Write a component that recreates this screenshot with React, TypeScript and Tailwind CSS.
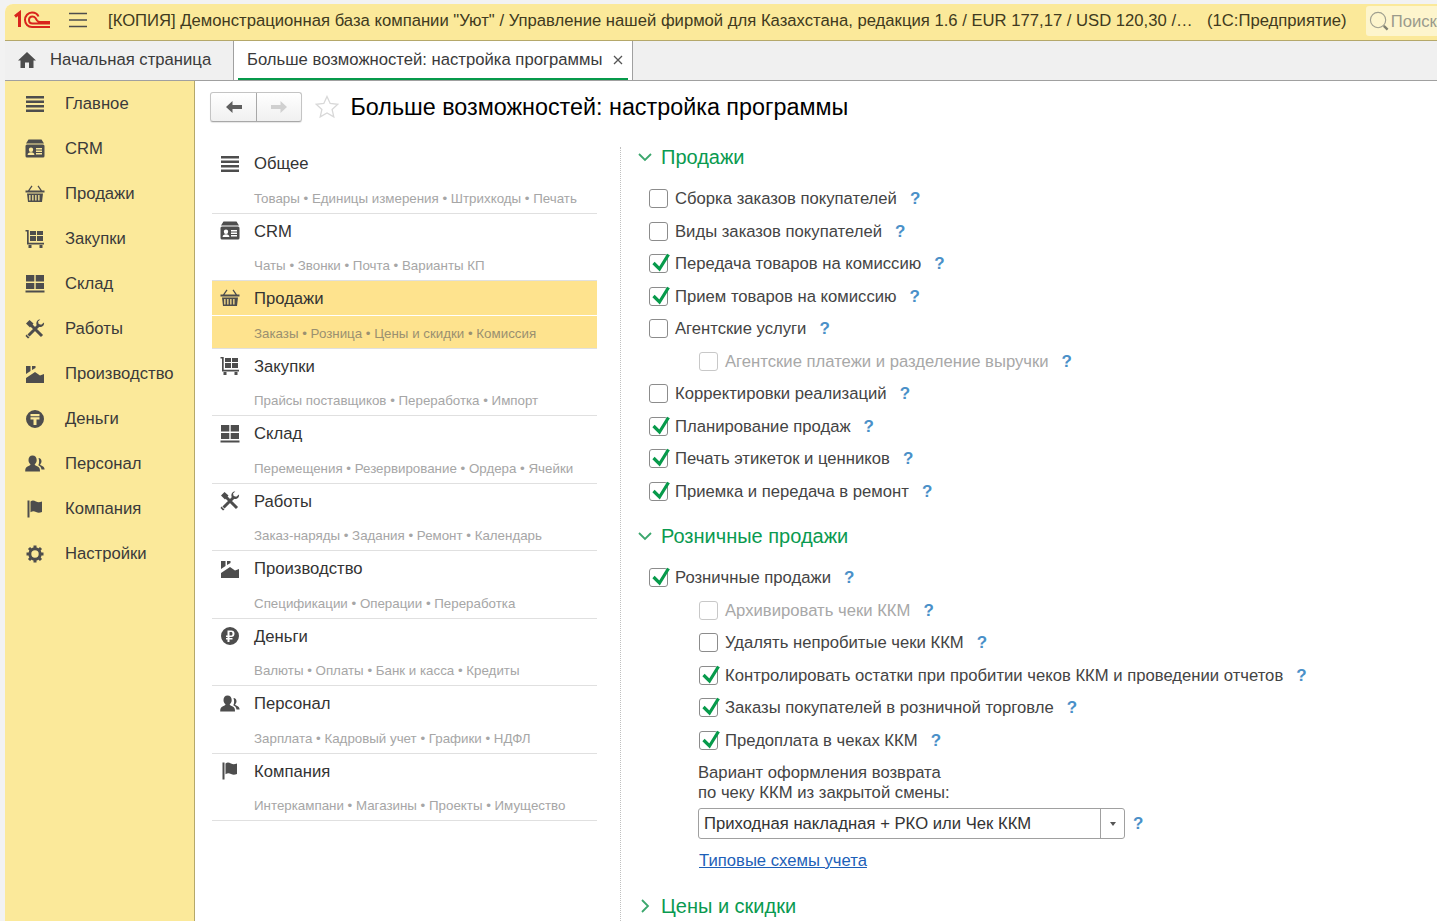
import { FunctionComponent } from "react";

const Icon: FunctionComponent<{ name: string; className?: string }> = ({ name, className = "w-5 h-5 text-[#4d4d4d]" }) => {
  const shapes: Record<string, JSX.Element> = {
    main: (
      <path d="M1 2h18v2.400H1zM1 6.600h18V9H1zM1 11h18v2.400H1zM1 15.600h18V18H1z" />
    ),
    crm: (
      <path fillRule="evenodd" d="M3.500.5h13L19 4.500H1zM2 5.500h16a1.500 1.500 0 0 1 1.500 1.500v10a1.500 1.500 0 0 1-1.500 1.500H2A1.500 1.500 0 0 1 .5 17V7A1.500 1.500 0 0 1 2 5.500zM6 8.500a2.200 2.200 0 1 0 0 4.400 2.200 2.200 0 0 0 0-4.400zm-3.400 7.500h6.800c0-2-1.500-2.800-3.400-2.800s-3.400.8-3.400 2.800zM11 9v1.400h6V9zm0 2.600v1.300h6v-1.300zm0 2.500V15.500h6v-1.400z" />
    ),
    sales: (
      <path fillRule="evenodd" d="M6.500 1.500l1 .8L4.600 6.500h10.800l-2.900-4.200 1-.8L17 6.500h2.500V8.400H.5V6.500H3zM2 9.500h16L17 18H3zm2.200 1.500v5.500h1.300V11zm3 0v5.500h1.300V11zm3 0v5.500h1.300V11zm3 0v5.500h1.300V11z" />
    ),
    buy: (
      <path fillRule="evenodd" d="M.5 1h3.200v12.800H19V15.400H2V2.600H.5zM5 2h6v4H5zm7 0h6v4h-6zM5 7h6v5H5zm7 0h6v5h-6zM3.500 16h3v3h-3zm11 0h3v3h-3z" />
    ),
    stock: (
      <path d="M1 1h8.300v6.500H1zM10.700 1H19v6.500h-8.300zM1 9h8.300v6H1zM10.700 9H19v6h-8.300zM.500 16.500h19V18.500H.500z" />
    ),
    works: (
      <>
        <path d="M5.500 5.500L17 17M14 6L3.500 16.500" fill="none" stroke="currentColor" strokeWidth="3" />
        <path d="M1 4.500L4.500 1l4 3.500-3.500 4zM12.500 1.500c-1.500 1.500-1.500 3.800-.3 5.500 1.700 1.500 4.300 1.500 6-.3.800-.9 1-2.200.8-3.200l-2.800 2.300-2.500-.8-.7-2.500 2.300-2c-1-.3-2.100 0-2.800 1zM1.500 15.500l3 3-1.500 1L.5 17z" />
      </>
    ),
    prod: (
      <path d="M1 19v-5l9-6 5 3.500 4-1.500v9zM1 2h4.500v5L1 10zM7 2h3.500v2L7 6z" />
    ),
    tenge: (
      <path fillRule="evenodd" d="M10 1a9 9 0 1 1 0 18 9 9 0 0 1 0-18zM5.500 5v2.200h9V5zm0 3.300v2.200h3V16h3v-5.500h3V8.300z" />
    ),
    ruble: (
      <path fillRule="evenodd" d="M10 1a9 9 0 1 1 0 18 9 9 0 0 1 0-18zM7.500 4.500V9.500H6V11h1.500v1H6v1.400h1.500V16h2v-2.600h3V12h-3v-1h1.800c2 0 3.200-1.300 3.200-3.300s-1.200-3.200-3.200-3.200zm2 1.600h1.500c1 0 1.500.6 1.500 1.600s-.5 1.800-1.500 1.800H9.500z" />
    ),
    staff: (
      <path d="M7.500 1.500c2.700 0 4.200 2 4.200 4.500 0 2-.8 3.500-2 4.300 0 1.200 1.500 1.500 3 2.200 1.800.8 2.300 2 2.300 5H.2c0-3 .6-4.200 2.300-5 1.500-.7 3-1 3-2.200-1.200-.8-2-2.300-2-4.300 0-2.500 1.500-4.500 4-4.500zM13.500 4c1.900 0 3 1.400 3 3.300 0 1.300-.6 2.500-1.400 3 .1.800.9 1.100 2 1.700 1.500.8 2.400 1.500 2.500 3.500h-3.100c-.4-2.300-1.400-3.300-3.200-4.200 1-1.700 1.100-4.500.2-7.300z" />
    ),
    company: (
      <path d="M2.500 1.500h2v17h-2zM5.500 2.500c2-1.500 3.500-1 5.500 0s3.500.8 6 0V13c-2.500 1-4 1-6 0s-3.500-1-5.500.3z" />
    ),
    settings: (
      <g fill="none" stroke="currentColor">
        <circle cx="10" cy="10" r="5.200" strokeWidth="3" />
        <path
          d="M10 1.500v3.500M10 15v3.500M1.500 10H5M15 10h3.500M4 4l2.500 2.500M16 4l-2.500 2.500M4 16l2.500-2.500M16 16l-2.500-2.500"
          strokeWidth="3"
        />
      </g>
    ),
    home: (
      <path d="M10 2l9 8.500h-2.500V18H12v-5.500H8V18H3.500v-7.500H1z" />
    ),
  };
  return (
    <svg viewBox="0 0 20 20" fill="currentColor" className={className}>
      {shapes[name]}
    </svg>
  );
};

const Logo1C = () => (
  <svg viewBox="0 0 38 20" className="w-[38px] h-5" fill="none" stroke="#d9241c">
    <path d="M1 6.500L5.500 3V17" strokeWidth="3" />
    <path d="M36 17H18c-4 0-7-3-7-7s3-7.500 7-7.500c3 0 5.500 1.500 6.500 4" strokeWidth="2" />
    <path d="M36 13.500H18.500c-2 0-3.500-1.500-3.500-3.500s1.500-3.500 3.500-3.500c1.300 0 2.300.6 3 1.500l1.500 2.500c.8 1 1.500 1.500 3 1.500h10" strokeWidth="2" />
  </svg>
);

const Arrow: FunctionComponent<{ dir: "left" | "right"; className: string }> = ({ dir, className }) => (
  <svg viewBox="0 0 18 14" className={`w-[18px] h-3.5 ${className}`} fill="currentColor">
    {dir === "left" ? <path d="M7.500 1L1 7l6.500 6V9H17V5H7.500z" /> : <path d="M10.500 1L17 7l-6.500 6V9H1V5h9.500z" />}
  </svg>
);

const sideItems = [
  ["main", "Главное"],
  ["crm", "CRM"],
  ["sales", "Продажи"],
  ["buy", "Закупки"],
  ["stock", "Склад"],
  ["works", "Работы"],
  ["prod", "Производство"],
  ["tenge", "Деньги"],
  ["staff", "Персонал"],
  ["company", "Компания"],
  ["settings", "Настройки"],
];

const groups = [
  ["main", "Общее", "Товары • Единицы измерения • Штрихкоды • Печать"],
  ["crm", "CRM", "Чаты • Звонки • Почта • Варианты КП"],
  ["sales", "Продажи", "Заказы • Розница • Цены и скидки • Комиссия"],
  ["buy", "Закупки", "Прайсы поставщиков • Переработка • Импорт"],
  ["stock", "Склад", "Перемещения • Резервирование • Ордера • Ячейки"],
  ["works", "Работы", "Заказ-наряды • Задания • Ремонт • Календарь"],
  ["prod", "Производство", "Спецификации • Операции • Переработка"],
  ["ruble", "Деньги", "Валюты • Оплаты • Банк и касса • Кредиты"],
  ["staff", "Персонал", "Зарплата • Кадровый учет • Графики • НДФЛ"],
  ["company", "Компания", "Интеркампани • Магазины • Проекты • Имущество"],
];

const Help: FunctionComponent<{ className?: string }> = ({ className = "ml-[13px]" }) => (
  <span className={`text-[#4a90c8] font-bold text-[17px] leading-none ${className}`}>?</span>
);

const Check: FunctionComponent<{ label: string; checked?: boolean; sub?: boolean; disabled?: boolean }> = ({
  label,
  checked,
  sub,
  disabled,
}) => (
  <div className={`h-[32.5px] flex items-center ${sub ? "pl-[78px]" : "pl-[28px]"}`}>
    <span
      className={`relative w-[19px] h-[19px] rounded-[3px] border bg-white shrink-0 mr-[7px] ${
        disabled ? "border-[#c8c8c8]" : "border-[#8c8c8c]"
      }`}
    >
      {checked && (
        <svg viewBox="0 0 22 22" className="absolute left-[-1px] top-[-3px] w-[22px] h-[22px]" fill="none" stroke="#079a4b" strokeWidth="3.200">
          <path d="M4.500 11l6 6L19.500 2.500" />
        </svg>
      )}
    </span>
    <span className={disabled ? "text-[#a8a8a8]" : "text-[#444444]"}>{label}</span>
    <Help />
  </div>
);

const SectionHead: FunctionComponent<{ title: string; open?: boolean; className?: string }> = ({ title, open, className = "" }) => (
  <div className={`flex items-center text-[#0a9a50] text-[20px] leading-6 ${className}`}>
    <svg viewBox="0 0 16 16" className="w-4 h-4 ml-[16px] mr-[8px]" fill="none" stroke="#3ba76d" strokeWidth="1.800">
      {open ? <path d="M2 5l6 6 6-6" /> : <path d="M5 2l6 6-6 6" />}
    </svg>
    {title}
  </div>
);

const App: FunctionComponent = () => {
  return (
    <div className="w-full h-screen overflow-hidden bg-[#f2f2f2] pl-[5px] pt-1 font-['Liberation_Sans',Arial,sans-serif] text-[16.67px] text-[#3a3a3a]">
      <div className="h-full flex flex-col bg-white rounded-tl-[8px] overflow-hidden">
        <header className="h-[37px] shrink-0 bg-[#fbe99a] border-b border-[#b5a86a] flex items-center pl-[9px] pb-[4px] whitespace-nowrap">
          <Logo1C />
          <svg viewBox="0 0 20 16" className="w-5 h-4 ml-[16px] mr-[20px]" stroke="#4d4d4d" strokeWidth="1.300">
            <path d="M1 1.500h18M1 8h18M1 14.500h18" />
          </svg>
          <span className="w-[1085px] overflow-hidden text-[#403a20]">
            [КОПИЯ] Демонстрационная база компании "Уют" / Управление нашей фирмой для Казахстана, редакция 1.6 / EUR 177,17 / USD 120,30 /…
          </span>
          <span className="ml-[14px] text-[#403a20]">(1С:Предприятие)</span>
          <div className="ml-[19px] flex-1 self-start mt-[2px] h-[30px] bg-[#fdf5cd] rounded-l-[3px] flex items-center pl-[3px] text-[#9a9a8c] overflow-hidden">
            <svg viewBox="0 0 22 22" className="w-[21px] h-[21px] mr-px shrink-0" fill="none">
              <circle cx="9.500" cy="9.500" r="8" stroke="#a0a090" strokeWidth="1.200" />
              <path d="M15.500 15.500l4 4" stroke="#808070" strokeWidth="2.500" />
            </svg>
            Поиск
          </div>
        </header>

        <nav className="h-10 shrink-0 bg-[#f0f0f0] border-b border-[#a0a0a0] flex whitespace-nowrap">
          <div className="w-[229px] flex items-center pl-[12px] pb-[2px] border-r border-[#a0a0a0]">
            <Icon name="home" className="w-[20px] h-[20px] text-[#4d4d4d] mr-[13px]" />
            Начальная страница
          </div>
          <div className="w-[399px] bg-white border-r border-[#a0a0a0] px-[4px]">
            <div className="h-full border-b-2 border-[#079a4b] flex items-center pl-[9px] pr-[5px] justify-between">
              Больше возможностей: настройка программы
              <svg viewBox="0 0 10 10" className="w-2.5 h-2.5" stroke="#555555" strokeWidth="1.300">
                <path d="M1 1l8 8M9 1l-8 8" />
              </svg>
            </div>
          </div>
        </nav>

        <div className="flex-1 flex min-h-0">
          <aside className="w-[190px] shrink-0 bg-[#fbe99a] border-r border-[#b5a86a] flex flex-col">
            {sideItems.map(([icon, label]) => (
              <div key={label} className="h-[45px] flex items-center pl-[20px] shrink-0 whitespace-nowrap">
                <Icon name={icon} />
                <span className="ml-[20px]">{label}</span>
              </div>
            ))}
          </aside>

          <main className="flex-1 min-w-0 flex flex-col">
            <div className="h-[51px] shrink-0 flex items-center pl-[15px]">
              <div className="w-[92px] h-[30px] flex rounded-[3px] border border-[#c4c4c4] border-b-[#a8a8a8] shadow-[0_1px_1px_rgba(0,0,0,0.1)] bg-gradient-to-b from-white to-[#f0f0f0]">
                <div className="w-[46px] flex items-center justify-center border-r border-[#a8a8a8]">
                  <Arrow dir="left" className="text-[#5f5f5f]" />
                </div>
                <div className="flex-1 flex items-center justify-center">
                  <Arrow dir="right" className="text-[#d0d0d0]" />
                </div>
              </div>
              <svg viewBox="0 0 24 24" className="w-6 h-6 ml-[13px] mr-[11.500px]" fill="none" stroke="#d8d8d8" strokeWidth="1.300">
                <path d="M12 1.500l3.200 7 7.600.8-5.700 5.100 1.700 7.500L12 18l-6.800 3.900 1.700-7.500L1.200 9.300l7.600-.8z" />
              </svg>
              <h1 className="text-[23.330px] leading-7 text-black whitespace-nowrap">Больше возможностей: настройка программы</h1>
            </div>

            <div className="flex-1 flex min-h-0 pl-[17px]">
              <div className="w-[385px] shrink-0 pt-[14px]">
                {groups.map(([icon, title, sub]) => {
                  const active = title === "Продажи";
                  return (
                    <div key={title} className="h-[67.500px] border-b border-[#e0e0e0] flex flex-col">
                      <div className={`h-[35px] flex items-center pl-[8px] ${active ? "bg-[#fee38e] border-b border-white" : ""}`}>
                        <Icon name={icon} />
                        <span className="ml-[14px] text-[#333333]">{title}</span>
                      </div>
                      <div className={`flex-1 flex items-center pl-[42px] pt-[4px] text-[13.330px] ${active ? "bg-[#fee38e] text-[#9a9070]" : "text-[#a6a6a6]"}`}>
                        {sub}
                      </div>
                    </div>
                  );
                })}
              </div>

              <div className="ml-[23px] flex-1 min-w-0 border-l border-dotted border-[#c0c0c0] mt-[15px] whitespace-nowrap">
                <SectionHead title="Продажи" open className="-mt-[2px]" />
                <div className="mt-[13.250px]">
                  <Check label="Сборка заказов покупателей" />
                  <Check label="Виды заказов покупателей" />
                  <Check label="Передача товаров на комиссию" checked />
                  <Check label="Прием товаров на комиссию" checked />
                  <Check label="Агентские услуги" />
                  <Check label="Агентские платежи и разделение выручки" sub disabled />
                  <Check label="Корректировки реализаций" />
                  <Check label="Планирование продаж" checked />
                  <Check label="Печать этикеток и ценников" checked />
                  <Check label="Приемка и передача в ремонт" checked />
                </div>
                <SectionHead title="Розничные продажи" open className="mt-[17px]" />
                <div className="mt-[13px]">
                  <Check label="Розничные продажи" checked />
                  <Check label="Архивировать чеки ККМ" sub disabled />
                  <Check label="Удалять непробитые чеки ККМ" sub />
                  <Check label="Контролировать остатки при пробитии чеков ККМ и проведении отчетов" sub checked />
                  <Check label="Заказы покупателей в розничной торговле" sub checked />
                  <Check label="Предоплата в чеках ККМ" sub checked />
                </div>
                <div className="pl-[77px] pt-[6.750px]">
                  <div className="leading-5 text-[#444444]">
                    Вариант оформления возврата
                    <br />
                    по чеку ККМ из закрытой смены:
                  </div>
                  <div className="flex items-center mt-[5px]">
                    <div className="w-[427px] h-[31px] border border-[#a0a0a0] rounded-[3px] flex items-center bg-white">
                      <span className="flex-1 pl-[5px] text-[#333333]">Приходная накладная + РКО или Чек ККМ</span>
                      <span className="w-6 h-full border-l border-[#a0a0a0] flex items-center justify-center">
                        <span className="w-0 h-0 border-x-[3.500px] border-x-transparent border-t-[4px] border-t-[#555555]" />
                      </span>
                    </div>
                    <Help className="ml-[8px]" />
                  </div>
                  <div className="mt-[12px] ml-px leading-5 underline text-[#1d5fb8]">Типовые схемы учета</div>
                </div>
                <SectionHead title="Цены и скидки" className="mt-[23px]" />
              </div>
            </div>
          </main>
        </div>
      </div>
    </div>
  );
};

export default App;
